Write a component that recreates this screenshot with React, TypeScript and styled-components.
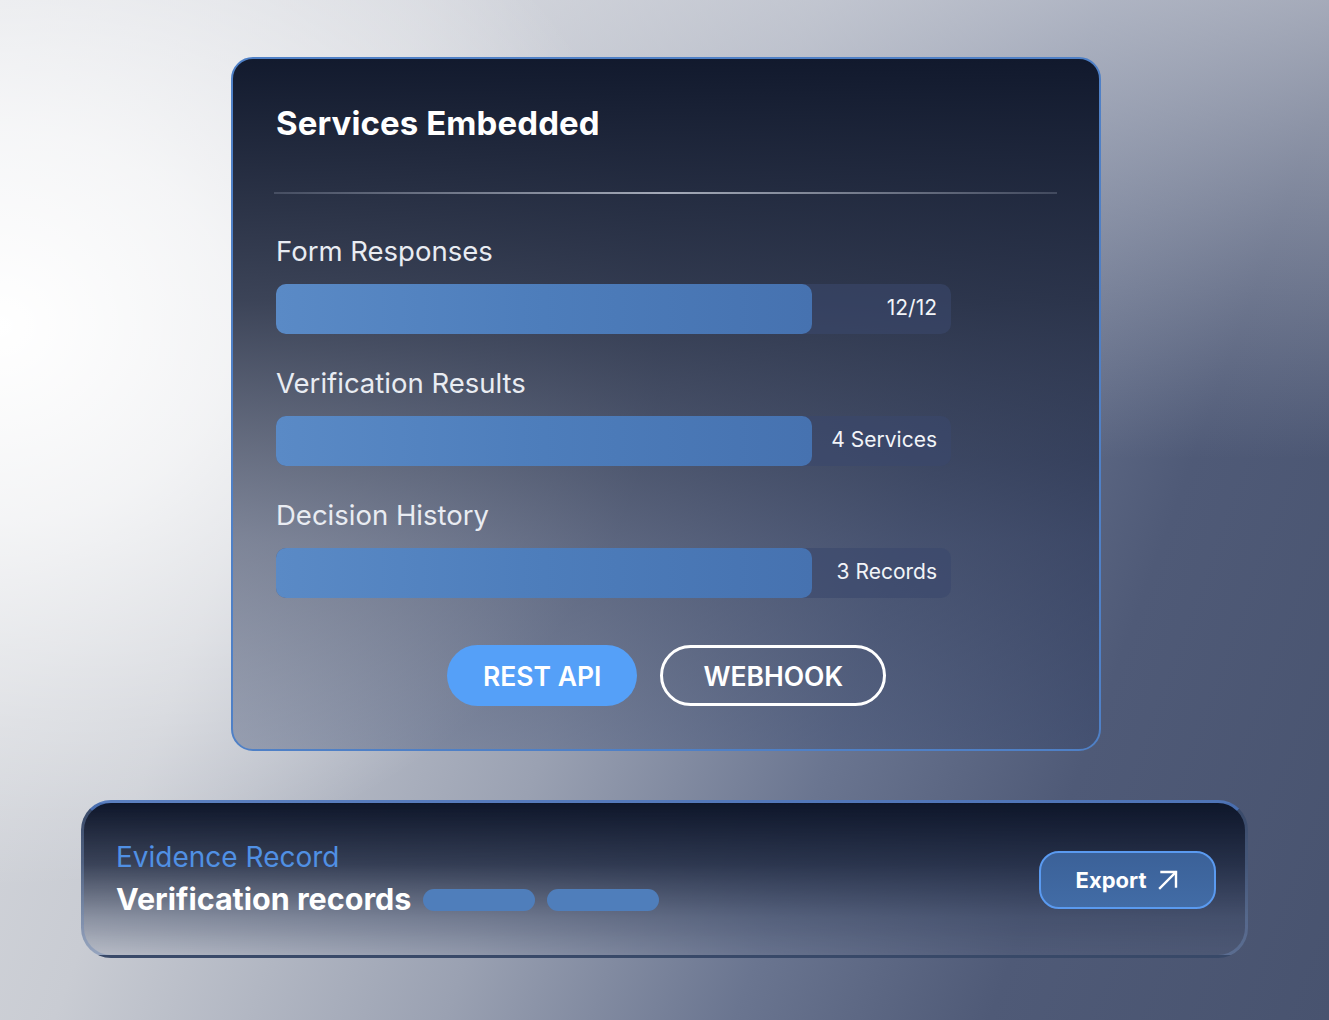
import React from 'react'
import styled, { createGlobalStyle } from 'styled-components'

const FONT = `Inter, "Noto Sans", "Liberation Sans", sans-serif`

const GlobalStyle = createGlobalStyle`
  html, body { margin: 0; padding: 0; }
  body { font-family: ${FONT}; }
`

const Page = styled.div`
  width: 1329px;
  height: 1020px;
  overflow: hidden;
  box-sizing: border-box;
  padding-top: 57px;
  display: flex;
  flex-direction: column;
  align-items: center;
  background:
    radial-gradient(ellipse 50% 55% at 0% 32%, #ffffff 0%, rgba(255,255,255,0.75) 35%, rgba(255,255,255,0) 100%),
    linear-gradient(180deg, rgba(220,222,228,0.6) 0%, rgba(220,222,228,0) 45%),
    linear-gradient(110deg, #dcdee2 0%, #c9ccd3 25%, #9aa1b2 48%, #6a7590 65%, #4f5a77 80%, #48536f 100%);
`

const Card = styled.section`
  width: 870px;
  height: 694px;
  box-sizing: border-box;
  margin-left: 3px;
  border: 2px solid #4f80c6;
  border-radius: 22px;
  padding: 42px 42px 0 43px;
  display: flex;
  flex-direction: column;
  background: linear-gradient(180deg, rgba(14,22,42,0.98) 0%, rgba(30,39,62,0.86) 35%, rgba(40,52,84,0.55) 70%, rgba(50,66,104,0.35) 100%);
`

const Title = styled.h1`
  margin: 0;
  font-size: 33px;
  font-weight: 700;
  line-height: 44px;
  color: #ffffff;
  letter-spacing: 0.1px;
`

const Divider = styled.div`
  height: 2px;
  margin: 47px 0 0 -2px;
  background: linear-gradient(90deg, rgba(90,98,118,0.6) 0%, #a4aab8 50%, rgba(80,88,108,0.7) 100%);
`

const Rows = styled.div`
  display: flex;
  flex-direction: column;
  gap: 32px;
  margin-top: 40px;
`

const Row = styled.div`
  display: flex;
  flex-direction: column;
  gap: 16px;
`

const Label = styled.div`
  font-size: 27.5px;
  line-height: 34px;
  color: #e9ecf2;
  font-weight: 400;
`

const Track = styled.div`
  position: relative;
  width: 675px;
  height: 50px;
  border-radius: 10px;
  background: rgba(58,72,108,0.6);
  display: flex;
  align-items: center;
  justify-content: flex-end;
  padding: 0 14px 3px 0;
  box-sizing: border-box;
`

const Fill = styled.div`
  position: absolute;
  left: 0;
  top: 0;
  bottom: 0;
  border-radius: 10px;
  background: linear-gradient(90deg, #5a8ac6 0%, #4d7dbb 50%, #4672b0 100%);
`

const Value = styled.span`
  position: relative;
  font-size: 21px;
  color: #f2f4f8;
`

const Buttons = styled.div`
  display: flex;
  justify-content: center;
  gap: 23px;
  margin-top: 47px;
`

const Pill = styled.button<{ $solid?: boolean }>`
  height: 61px;
  padding: 0 ${({ $solid }) => ($solid ? '36px' : '40px')};
  border-radius: 31px;
  box-sizing: border-box;
  font-family: ${FONT};
  font-size: 26.5px;
  font-weight: 600;
  color: #ffffff;
  cursor: pointer;
  background: ${({ $solid }) => ($solid ? '#55a0f8' : 'transparent')};
  border: ${({ $solid }) => ($solid ? 'none' : '3px solid #ffffff')};
`

const Strip = styled.section`
  width: 1167px;
  height: 158px;
  box-sizing: border-box;
  margin-top: 49px;
  border: 3px solid rgba(110,135,180,0.45);
  border-top-color: rgba(80,120,190,0.9);
  border-radius: 30px;
  padding: 0 29px 0 32px;
  display: flex;
  align-items: center;
  justify-content: space-between;
  background: linear-gradient(180deg, rgba(14,22,42,1) 0%, rgba(32,42,66,0.85) 40%, rgba(60,72,100,0.45) 75%, rgba(90,102,130,0.15) 100%);
`

const StripText = styled.div`
  display: flex;
  flex-direction: column;
  gap: 5px;
  margin-top: -2px;
`

const Kicker = styled.div`
  font-size: 28px;
  line-height: 36px;
  color: #5090e4;
  font-weight: 400;
`

const Headline = styled.div`
  display: flex;
  align-items: center;
  gap: 12px;
  font-size: 30.5px;
  line-height: 38px;
  font-weight: 700;
  color: #ffffff;
`

const Chips = styled.div`
  display: flex;
  gap: 12px;
  margin-top: 2px;
`

const Chip = styled.span`
  width: 112px;
  height: 22px;
  border-radius: 11px;
  background: #4f7ebb;
`

const ExportBtn = styled.button`
  width: 177px;
  height: 58px;
  margin-top: 2px;
  box-sizing: border-box;
  border: 2px solid #5a9af0;
  border-radius: 20px;
  background: linear-gradient(180deg, #3b6198 0%, #426ca6 100%);
  display: flex;
  align-items: center;
  justify-content: center;
  gap: 11px;
  font-family: ${FONT};
  font-size: 22px;
  font-weight: 700;
  color: #ffffff;
  cursor: pointer;
`

const ArrowIcon = () => (
  <svg width="22" height="22" viewBox="0 0 22 22" fill="none" stroke="#ffffff" strokeWidth="2.4" strokeLinecap="square">
    <path d="M3 19 L18.5 3.5" />
    <path d="M4.5 3 H19 V17.5" />
  </svg>
)

const rows = [
  { label: 'Form Responses', value: '12/12', fill: 536 },
  { label: 'Verification Results', value: '4 Services', fill: 536 },
  { label: 'Decision History', value: '3 Records', fill: 536 },
]

export default function App() {
  return (
    <>
      <GlobalStyle />
      <Page>
        <Card>
          <Title>Services Embedded</Title>
          <Divider />
          <Rows>
            {rows.map(r => (
              <Row key={r.label}>
                <Label>{r.label}</Label>
                <Track>
                  <Fill style={{ width: r.fill }} />
                  <Value>{r.value}</Value>
                </Track>
              </Row>
            ))}
          </Rows>
          <Buttons>
            <Pill $solid>REST API</Pill>
            <Pill>WEBHOOK</Pill>
          </Buttons>
        </Card>

        <Strip>
          <StripText>
            <Kicker>Evidence Record</Kicker>
            <Headline>
              Verification records
              <Chips>
                <Chip />
                <Chip />
              </Chips>
            </Headline>
          </StripText>
          <ExportBtn>
            Export <ArrowIcon />
          </ExportBtn>
        </Strip>
      </Page>
    </>
  )
}
